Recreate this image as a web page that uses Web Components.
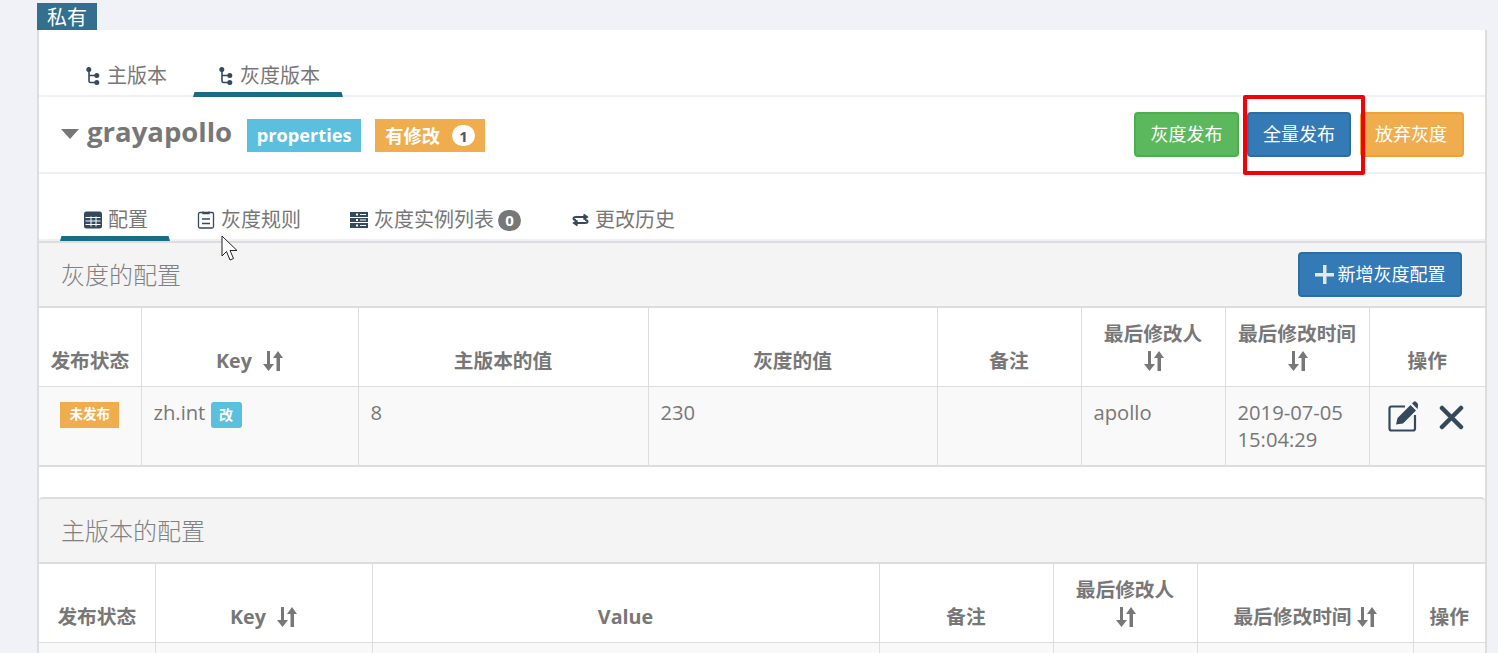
<!DOCTYPE html>
<html lang="zh"><head><meta charset="utf-8"><title>Apollo</title>
<style>
html,body{margin:0;padding:0;height:653px;overflow:hidden;background:#f0f2f7}
body{font-family:"Open Sans","Noto Sans CJK SC",sans-serif;color:#777;font-size:19px;position:relative}
</style></head><body>
<script>
const ICONS={
fork:'<svg width="14" height="19" viewBox="0 0 14 19" fill="none"><path d="M3 2V14Q3 15.500 4.500 15.500H11M3 8.500H11" stroke="#34495e" stroke-width="1.600"/><circle cx="2.800" cy="2.600" r="2.500" fill="#34495e"/><circle cx="10.800" cy="8.500" r="2.500" fill="#34495e"/><circle cx="10.800" cy="15.500" r="2.500" fill="#34495e"/></svg>',
table:'<svg width="18" height="18" viewBox="0 0 18 18"><rect width="18" height="17" y=".5" rx="2.500" fill="#34495e"/><path d="M1.500 6.500H16.500M1.500 10H16.500M1.500 13.500H16.500M7 5.500V15.500M12 5.500V15.500" stroke="#fff" stroke-width="1"/></svg>',
rule:'<svg width="18" height="18" viewBox="0 0 18 18" fill="none" stroke="#34495e"><rect x="1.500" y="1.500" width="15" height="15.500" rx="1.500" stroke-width="1.300"/><path d="M6 .5V2.500H12V.5M5 8H13M5 12.500H13" stroke-width="1.300"/></svg>',
inst:'<svg width="18" height="18" viewBox="0 0 18 18"><path d="M0 1H18V6H0ZM0 7H18V11H0ZM0 12H18V17H0Z" fill="#34495e"/><path d="M6 2.500H8V4.500H6ZM6 8H8V10H6ZM6 13.500H8V15.500H6Z" fill="#fff"/><path d="M10 3.500H16M10 9H16M10 14.500H16" stroke="#fff" stroke-width="1.200"/></svg>',
hist:'<svg width="17" height="14" viewBox="0 0 17 14" fill="none" stroke="#34495e" stroke-width="2"><path d="M14 4H4Q1.500 4 1.500 5.500T4 7M11.500 1.500L15 4L11.500 6.500"/><path d="M3 10H13Q15.500 10 15.500 8.500T13 7M5.500 7.500L2 10L5.500 12.500"/></svg>',
plus:'<svg width="19" height="19" viewBox="0 0 19 19"><path d="M8 0H11.500V8H19V11.500H11.500V19H8V11.500H0V8H8Z" fill="#e4e9ef"/></svg>',
sort:'<svg width="21" height="20" viewBox="0 0 21 20" fill="#777"><path d="M5 0H8V13H12L6.500 20L1 13H5Z"/><path d="M16 0L21 7H18V20H14.500V7H11Z"/></svg>',
edit:'<svg width="30" height="31" viewBox="0 0 30 31" fill="none"><path d="M17 5.500H3.500Q1.500 5.500 1.500 7.500V27.500Q1.500 29.500 3.500 29.500H25Q27 29.500 27 27.500V14" stroke="#34495e" stroke-width="2.200"/><path d="M8 23.500L9.500 17L22.500 4L28 9.500L15 22.500ZM24 2.500L26 .5Q27 0 28 .8L30 3Q30.500 4 30 5L29.500 8Z" fill="#34495e"/></svg>',
times:'<svg width="25" height="25" viewBox="0 0 25 25"><path d="M3 3L22 22M22 3L3 22" stroke="#34495e" stroke-width="4.500" stroke-linecap="round"/></svg>'
};
const CONFIGS={
gray:{w:[102,217,290,289,144,144,144,116],h:["发布状态","Key|sp","主版本的值","灰度的值","备注","最后修改人|br","最后修改时间|br","操作"],
r:[['<span class="st">未发布</span>','zh.int <span class="ch">改</span>',"8","230","","apollo","2019-07-05<br>15:04:29",'<div class="ops"><x-icon name="edit"></x-icon><x-icon name="times"></x-icon></div>']]},
main:{w:[116,217,507,174,144,216,72],h:["发布状态","Key|sp","Value","备注","最后修改人|br","最后修改时间|nb","操作"],r:[["","","","","","",""]]}
};
function def(name,html,init){
  customElements.define(name,class extends HTMLElement{
    connectedCallback(){ if(this.shadowRoot) return; const r=this.attachShadow({mode:'open'}); r.innerHTML=html; if(init) init.call(this,r); }
  });
}
def('x-icon',`<style>:host{display:inline-flex;align-items:center;line-height:0}</style><span id="i" style="display:inline-flex"></span>`,function(r){r.getElementById('i').innerHTML=ICONS[this.getAttribute('name')]});

def('x-tab',`<style>
:host{display:flex;align-items:center;height:37px;box-sizing:border-box;margin-bottom:-2px;padding:0 var(--pr,22px) 8px var(--pl,24px);position:relative;color:#777;font-size:20px;white-space:nowrap;gap:var(--g,6px)}
::slotted(x-icon){margin-top:3px}
:host([active])::after{content:"";position:absolute;left:0;right:0;bottom:0;height:5px;background:#1b6d85;clip-path:polygon(1.500px 0,calc(100% - 1.500px) 0,100% 100%,0 100%)}
</style><slot></slot>`);
def('x-tabs',`<style>
:host{display:flex;gap:3px;padding-left:21px;border-bottom:2px solid #eef0f5;box-sizing:border-box}
</style><slot></slot>`);

def('x-btn',`<style>
:host{display:inline-flex;align-items:center;justify-content:center;gap:4px;box-sizing:border-box;height:45px;border-radius:4px;font-size:18px;color:#fff;border:2px solid var(--b);background:var(--c);white-space:nowrap;padding:0 14px 3px}
::slotted(x-icon){margin-top:3px}
</style><slot></slot>`);
def('x-label',`<style>
:host{display:inline-flex;align-items:center;justify-content:var(--j,center);box-sizing:border-box;height:33px;width:var(--w);background:var(--c);color:#fff;font-weight:700;font-size:18.200px;padding:0 var(--p,10px) 2px;white-space:nowrap}
</style><slot></slot>`);

def('x-ns-header',`<style>
:host{display:flex;align-items:center;height:77px;box-sizing:border-box;padding:0 21px 0 21px;border-bottom:2px solid #eef0f5}
.tri{width:0;height:0;border-left:9.500px solid transparent;border-right:9.500px solid transparent;border-top:10px solid #777;margin:0 8px 0 1px;position:relative;top:-1px}
.name{font-size:27.500px;font-weight:700;color:#777;margin-right:15px;line-height:1;position:relative;top:-3px}
.l{display:flex;gap:14px;position:relative;top:1px;flex:1}
.b{display:flex;gap:8px;align-items:center}
.badge{display:inline-flex;align-items:center;justify-content:center;width:23px;height:21px;border-radius:11px;background:#fff;color:#555;font-size:15px;margin:2px 0 0 12px;font-weight:700}
</style><span class="tri"></span><span class="name">grayapollo</span>
<div class="l"><x-label style="--c:#5bc0de;--w:114px">properties</x-label><x-label style="--c:#f0ad4e;--w:110px">有修改<span class="badge">1</span></x-label></div>
<div class="b"><x-btn style="--c:#5cb85c;--b:#4cae4c;width:105px">灰度发布</x-btn><x-btn style="--c:#337ab7;--b:#2e6da4;width:104px">全量发布</x-btn><x-btn style="--c:#f0ad4e;--b:#eea236;width:104px;margin-left:1px;padding-right:16px">放弃灰度</x-btn></div>`);

def('x-panel-head',`<style>
:host{display:flex;align-items:center;justify-content:space-between;box-sizing:border-box;background:#f4f4f4;height:67px;padding:0 23px 0 22px;border-bottom:2px solid #ddd;border-top:2px solid #ddd;border-radius:var(--r,0)}
.t{font-size:24px;font-weight:300;color:#808080;padding-bottom:2px}
</style><span class="t"><slot></slot></span><slot name="action"></slot>`);

def('x-config-table',`<style>
:host{display:block}
table{border-collapse:collapse;table-layout:fixed;width:100%;font-size:20.200px;color:#777}
th,td{border:1px solid #ddd;padding:12px;line-height:27px;box-sizing:border-box;overflow:visible}
tr>*:first-child{border-left:0}tr>*:last-child{border-right:0}
thead tr>*{border-top:0}
th{vertical-align:bottom;text-align:center;font-weight:700;color:#777;background:#fff;padding:12px 6px;font-size:19.700px}
td{vertical-align:top;background:#f9f9f9;height:78px}
th x-icon{vertical-align:-3px}
th x-icon.sp{margin-left:5px}
th x-icon.nb{margin-left:4px}
th x-icon.br{margin-left:0}
tbody tr:last-child td{border-bottom:2px solid #ddd}
.st{display:inline-flex;align-items:center;justify-content:center;width:59px;height:26px;background:#f0ad4e;color:#fff;font-weight:700;font-size:13.500px;padding-bottom:1px;box-sizing:border-box;vertical-align:top;margin-top:3px}
.ch{display:inline-flex;align-items:center;justify-content:center;width:31px;height:26px;background:#5bc0de;color:#fff;border-radius:3px;font-size:14px;font-weight:700;vertical-align:top;margin-top:3px;padding-bottom:1px;box-sizing:border-box}
.c{text-align:center;padding-left:0;padding-right:0}
.ops{display:flex;gap:21px;padding:2px 0 0 6px}
.ops x-icon:last-child{margin-top:2px}
</style><table><colgroup id="cg"></colgroup><thead><tr id="h"></tr></thead><tbody id="b"></tbody></table>`,function(r){
  const o=CONFIGS[this.getAttribute('config')];
  r.getElementById('cg').innerHTML=o.w.map(w=>`<col style="width:${w}px">`).join('');
  r.getElementById('h').innerHTML=o.h.map(t=>{
    const m=t.split('|');
    if(m.length==1) return `<th>${t}</th>`;
    const sep=m[1]=='br'?'<br>':m[1]=='sp'?' ':'';
    return `<th>${m[0]}${sep}<x-icon class="${m[1]}" name="sort"></x-icon></th>`;
  }).join('');
  r.getElementById('b').innerHTML=o.r.map(row=>'<tr>'+row.map((c,i)=>`<td${i==0?' class="c"':''}>${c}</td>`).join('')+'</tr>').join('');
});

def('x-panel',`<style>
:host{display:block}
</style><slot></slot>`);

def('x-page',`<style>
:host{display:block;box-sizing:border-box;width:1498px;height:653px;overflow:hidden;padding:3px 0 0 37px;position:relative}
.tag{display:flex;align-items:center;justify-content:center;box-sizing:border-box;width:60px;height:27px;background:#33708f;color:#fff;font-size:20px}
.card{width:1450px;height:640px;box-sizing:border-box;background:#fff;border-left:2px solid #ddd;border-right:2px solid #ddd;padding-top:30px}
.gap{height:30px}
.fk{--pl:26px;--g:7px;--pr:23px}
.badge0{display:inline-flex;align-items:center;justify-content:center;width:23px;height:21px;border-radius:11px;background:#777;color:#fff;font-size:15px;font-weight:700;margin:3px 0 0 -2px}
.red{position:absolute;left:1243px;top:95px;width:122px;height:80px;box-sizing:border-box;border:4px solid #f40006;border-radius:2px}
.cur{position:absolute;left:221px;top:235px}
</style>
<div class="tag">私有</div>
<div class="card">
<x-tabs><x-tab class="fk"><x-icon name="fork"></x-icon>主版本</x-tab><x-tab class="fk" active><x-icon name="fork"></x-icon>灰度版本</x-tab></x-tabs>
<x-ns-header></x-ns-header>
<div class="gap"></div>
<x-tabs>
<x-tab active><x-icon name="table"></x-icon>配置</x-tab>
<x-tab><x-icon name="rule"></x-icon>灰度规则</x-tab>
<x-tab style="--pr:24px"><x-icon name="inst"></x-icon>灰度实例列表<span class="badge0">0</span></x-tab>
<x-tab><x-icon name="hist"></x-icon>更改历史</x-tab>
</x-tabs>
<x-panel>
<x-panel-head>灰度的配置<x-btn slot="action" style="--c:#337ab7;--b:#2e6da4;width:164px"><x-icon name="plus"></x-icon>新增灰度配置</x-btn></x-panel-head>
<x-config-table config="gray"></x-config-table>
</x-panel>
<div class="gap"></div>
<x-panel>
<x-panel-head style="--r:4px 4px 0 0">主版本的配置</x-panel-head>
<x-config-table config="main"></x-config-table>
</x-panel>
</div>
<div class="red"></div>
<svg class="cur" width="20" height="27" viewBox="0 0 20 27"><path d="M1 1V21L5.500 16.500L9 25L12.500 23.500L9 15.500H16Z" fill="#fff" stroke="#222" stroke-width="1"/></svg>`);
const p=document.createElement('x-page');document.body.appendChild(p);
</script>
</body></html>
